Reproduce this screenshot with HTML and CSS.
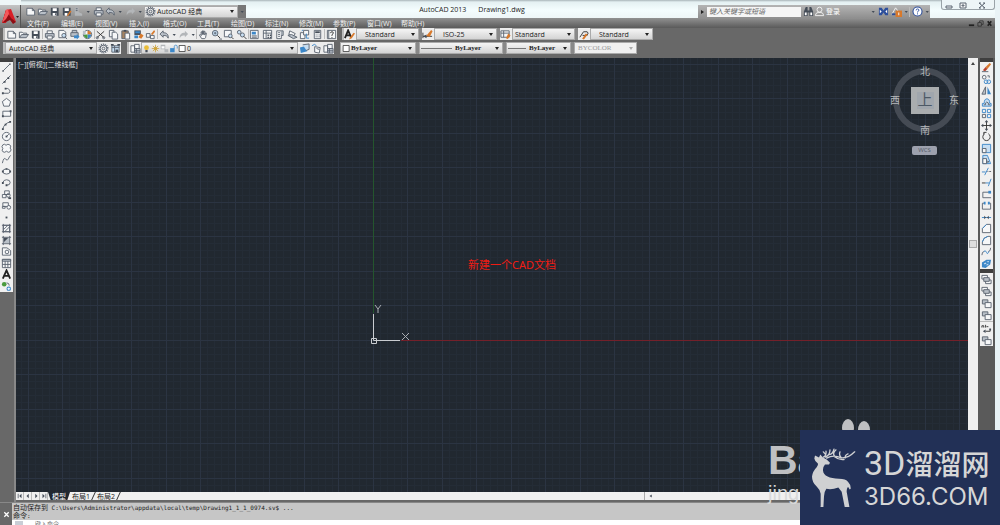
FILE: index.html
```html
<!DOCTYPE html>
<html lang="zh-CN">
<head>
<meta charset="utf-8">
<title>AutoCAD 2013 Drawing1.dwg</title>
<link rel="stylesheet" href="styles.css">
</head>
<body>
<svg class="defs" aria-hidden="true">
  <defs>
    <symbol id="new" viewBox="0 0 12 12"><path class="o w" d="M2 2.500h6l2.500 2.500v5h-8.500z"/><path class="o" d="M8 2.500v2.500h2.500"/></symbol>
    <symbol id="open" viewBox="0 0 12 12"><path class="o w" d="M1.500 9.500v-6h3l1 1h4v2"/><path class="o g" d="M1.500 9.500l2.500-3.500h7.500l-2.500 3.500z"/></symbol>
    <symbol id="save" viewBox="0 0 12 12"><path class="d" d="M2 2h8.500v8.500h-7.500l-1-1z"/><path class="wf" d="M4 2.500h4.500v3h-4.500zM4 7.500h4v3h-4z"/><path class="d" d="M6.500 8h1v2h-1z"/></symbol>
    <symbol id="saveas" viewBox="0 0 12 12"><path class="d" d="M2 2h8.500v8.500h-7.500l-1-1z"/><path class="wf" d="M4 2.500h4.500v3h-4.500zM4 7.500h3v3h-3z"/><path class="or" d="M10 5l1.500 1-3.500 4.500-2 1z"/></symbol>
    <symbol id="print" viewBox="0 0 12 12"><path class="o w" d="M3.500 5v-3h5.500v3"/><path class="o g" d="M1.500 5h9.500v4h-9.500z"/><path class="o w" d="M3.500 7.500h5.500v3.500h-5.500z"/></symbol>
    <symbol id="preview" viewBox="0 0 12 12"><path class="o w" d="M2 1.500h5.500l2 2v6h-7.500z"/><circle class="o b" cx="7.500" cy="7" r="2.200"/><path class="o" d="M9 9l2 2"/></symbol>
    <symbol id="publish" viewBox="0 0 12 12"><path class="o g" d="M2 4h8v4h-8zM3.500 4v-2.500h5v2.500"/><path class="bf" d="M5.500 7h3v-1.500l3 3-3 3v-1.500h-3z"/></symbol>
    <symbol id="globe" viewBox="0 0 12 12"><circle class="o w" cx="6" cy="6" r="4.500"/><path class="or" d="M6 6v-4a4 4 0 0 1 4 4z"/><path class="bf" d="M6 6h4a4 4 0 0 1-4 4z"/><path class="gr" d="M6 6v4a4 4 0 0 1-4-4z"/><path class="g" d="M1 2h3v4h-3z"/></symbol>
    <symbol id="cut" viewBox="0 0 12 12"><path class="o k" d="M2 2.500l8 7M10 2.500l-8 7"/><circle class="o" cx="2.500" cy="9.500" r="1.200"/><circle class="o" cx="9.500" cy="9.500" r="1.200"/></symbol>
    <symbol id="copy" viewBox="0 0 12 12"><path class="o w" d="M1.500 1.500h5v7h-5z"/><path class="o w" d="M4.500 3.500h4l2 2v5.500h-6z"/></symbol>
    <symbol id="paste" viewBox="0 0 12 12"><path class="o br" d="M2 2h7v8.500h-7z"/><path class="d" d="M4 1h3v2h-3z"/><path class="o w" d="M5.500 4.500h5v6.500h-5z"/></symbol>
    <symbol id="match" viewBox="0 0 12 12"><path class="d" d="M1.500 1.500h7v5h-7z"/><path class="bf" d="M2.500 2.500h5v2h-5zM1.500 7h4v3h-4z"/><path class="or" d="M8.500 5l3 2-2.500 3.500-3-1.500z"/></symbol>
    <symbol id="block" viewBox="0 0 12 12"><path class="o w" d="M1.500 5h4v4h-4zM6 7h4v3.500h-4z"/><path class="or" d="M10 1l1 2-3 3.500-1.500-1z"/></symbol>
    <symbol id="undo" viewBox="0 0 12 12"><path class="o g" d="M1 5.500l3.500-3.500v2c4 0 6 2 5.500 6-1-2.500-2.500-3-5.500-3v2z"/></symbol>
    <symbol id="redo" viewBox="0 0 12 12"><path class="l" d="M11 5.500l-3.500-3.500v2c-4 0-6 2-5.500 6 1-2.500 2.500-3 5.500-3v2z"/></symbol>
    <symbol id="caret" viewBox="0 0 6 12"><path class="d" d="M1.500 5.500h3.500l-1.750 2z"/></symbol>
    <symbol id="pan" viewBox="0 0 12 12"><path class="o w" d="M4 10.500l-2.500-4 .8-.6 1.400 1.300-.4-4 .9-.2.7 3v-4h1v4l.8-3.600.9.200-.3 4 1-2.400.9.300-1 5-.8 1z"/></symbol>
    <symbol id="zoom" viewBox="0 0 12 12"><circle class="o b" cx="4.500" cy="4.500" r="3"/><path class="o k" d="M7 7l3 3"/><path class="o" d="M3 4.500h3M4.500 3v3M9 11h3"/></symbol>
    <symbol id="zoomwin" viewBox="0 0 12 12"><path class="o w" d="M1.500 1.500h7.500v7h-7.500z"/><circle class="o b" cx="8" cy="7.500" r="2"/><path class="o k" d="M9.500 9l2 2"/></symbol>
    <symbol id="zoomprev" viewBox="0 0 12 12"><circle class="o b" cx="3.500" cy="3.500" r="2"/><circle class="o b" cx="7" cy="6.500" r="2.200"/><path class="o k" d="M8.500 8l3 3"/></symbol>
    <symbol id="props" viewBox="0 0 12 12"><path class="o w" d="M1.500 1.500h8.500v9h-8.500z"/><path class="bf" d="M3 3h4.500v3h-4.500z"/><path class="o" d="M3 7.500h5.500M3 9h5.500"/></symbol>
    <symbol id="dc" viewBox="0 0 12 12"><path class="o w" d="M1.500 1.500h9v9h-9zM4.500 1.500v9M1.500 4.500h9"/><path class="d" d="M6 6h1.500v1.500h-1.500zM8.500 6h1.500v1.500h-1.500zM6 8.500h1.500v1.500h-1.500zM8.500 8.500h1.500v1.500h-1.500z"/></symbol>
    <symbol id="palette" viewBox="0 0 12 12"><path class="o w" d="M3 2h5v8.500h-5z"/><path class="o g" d="M8 2h2v5h-2"/><path class="o" d="M4.500 4h2M4.500 6h2M4.500 8h2"/></symbol>
    <symbol id="plan" viewBox="0 0 12 12"><path class="l" d="M2 1.500h4v5l4 2v2h-8z"/><path class="o" d="M3 3h2M3 5h2"/></symbol>
    <symbol id="sheet" viewBox="0 0 12 12"><path class="o w" d="M3 2l6 3-2 3-5-2z"/><path class="o g" d="M1 7l4-1 6 3-4 1.500z"/></symbol>
    <symbol id="markup" viewBox="0 0 12 12"><path class="o w" d="M1.500 4h5v6.500h-5z"/><path class="o w" d="M5 1.500h5.500v5h-5.500z"/><path class="bfo" d="M8 5v5h3M3 2l1.500-1"/></symbol>
    <symbol id="calc" viewBox="0 0 12 12"><path class="o w" d="M2.500 1.500h7v9h-7z"/><path class="d" d="M3.500 2.500h5v2h-5z"/><path class="dash" d="M4 6.500h5M4 8.500h5"/></symbol>
    <symbol id="help" viewBox="0 0 12 12"><path class="o w" d="M1.500 1.500h9v9h-9zM3 1.500v9"/><path class="o k" d="M5 4.500q0-1.500 1.500-1.500t1.500 1.200-1.500 2v1.300M6.500 8.800v1"/></symbol>
    <symbol id="gear" viewBox="0 0 12 12"><circle class="dash wide" cx="6" cy="6" r="4.500"/><circle class="o" cx="6" cy="6" r="3.600"/><circle class="o" cx="6" cy="6" r="1.500"/></symbol>
    <symbol id="lock" viewBox="0 0 12 12"><path class="o b" d="M2 3h8v7h-8z"/><path class="o" d="M2 5h8M5 3v7"/><path class="d" d="M1 1h3v2h-3zM8 1h3v2h-3zM6 7h3v3h-3z"/></symbol>
    <symbol id="layers" viewBox="0 0 12 12"><path class="o w" d="M1 3h4v7h-4zM5 1.500h5v5h-5z"/><path class="o g" d="M5 6h6v5h-6z"/><path class="o" d="M7 6v5M5 8.500h6"/></symbol>
    <symbol id="layerblue" viewBox="0 0 12 12"><path class="bf" d="M1 5l7-2 1 6-7 2z"/><path class="o b" d="M4 2l7-1v6l-3 1"/></symbol>
    <symbol id="layerprev" viewBox="0 0 12 12"><path class="bfo" d="M1 3q3-3 5 0"/><path class="o w" d="M4 4l6 1-1 6-5-1z"/><path class="o" d="M6 6l3 1"/></symbol>
    <symbol id="bulb" viewBox="0 0 12 12"><circle class="ye" cx="6" cy="5" r="3.200"/><path class="d" d="M4.500 8h3v3h-3z"/></symbol>
    <symbol id="sun" viewBox="0 0 12 12"><circle class="ye" cx="6" cy="6" r="2.500"/><path class="yeo" d="M6 1v10M1 6h10M2.500 2.500l7 7M9.500 2.500l-7 7"/></symbol>
    <symbol id="freeze" viewBox="0 0 12 12"><path class="l" d="M1 1h6v6h-6zM6 7h5v4h-5z"/><path class="wf" d="M2 3h4v3h-4z"/></symbol>
    <symbol id="unlock" viewBox="0 0 12 12"><path class="bf" d="M1.500 5.500h6v5.500h-6z"/><path class="bfo" d="M7 6v-2.500q0-2 2-2t2 2v2.500"/></symbol>
    <symbol id="square" viewBox="0 0 12 12"><path class="o k white" d="M1.500 2h8v8h-8z"/></symbol>
    <symbol id="textstyle" viewBox="0 0 12 12"><path class="ks" d="M1 10l3.500-8.500 3 7M2.500 7h4"/><path class="or" d="M10.500 4l1.500 1-3.500 5-3 1.500 1-2.500z"/></symbol>
    <symbol id="dimstyle" viewBox="0 0 12 12"><path class="o k" d="M1 4v6M1 8h10"/><path class="d" d="M1 8l4-2v4z"/><path class="or" d="M10 1l1.500 1.500-3 6-4-1z"/></symbol>
    <symbol id="tablestyle" viewBox="0 0 12 12"><path class="o w" d="M1 2h9v7h-9zM1 4.500h9M4 2v7"/><path class="or" d="M9 5l2.500 2-3 4-2-1z"/></symbol>
    <symbol id="leader" viewBox="0 0 12 12"><path class="o k" d="M2 9l4-6h4q2 1 0 4h-5"/><path class="or" d="M8.500 5l2 1-4 5.500-2-1z"/></symbol>
    <symbol id="line" viewBox="0 0 12 12"><path class="o" d="M2.500 9.500l7-7"/><path class="d" d="M1.500 9h1.500v1.500h-1.500zM9 1.500h1.500v1.500h-1.500z"/></symbol>
    <symbol id="xline" viewBox="0 0 12 12"><path class="o" d="M1.500 10.500l9-9"/><path class="d" d="M3 7.500h2v2h-2zM7 3.500h2v2h-2z"/></symbol>
    <symbol id="pline" viewBox="0 0 12 12"><path class="o" d="M2 9h6q3-1 1.500-3.500t-5-1.500"/><path class="d" d="M1 8h2v2h-2zM4 3h2v2h-2z"/></symbol>
    <symbol id="polygon" viewBox="0 0 12 12"><path class="o w" d="M6 1.500l4.500 3.500-1.500 5h-6l-1.500-5z"/></symbol>
    <symbol id="rect" viewBox="0 0 12 12"><path class="o w" d="M2 3.500h8.500v5.500h-8.500z"/><path class="d" d="M1 8h2v2h-2zM9.500 2.500h2v2h-2z"/></symbol>
    <symbol id="arc" viewBox="0 0 12 12"><path class="o" d="M2 10q1-6 8-8"/><path class="d" d="M1 9h2v2h-2zM4 4h2v2h-2zM9 1h2v2h-2z"/></symbol>
    <symbol id="circle" viewBox="0 0 12 12"><circle class="o w" cx="6" cy="6" r="4.500"/><path class="o" d="M6 6l2.500-2.500"/><path class="d" d="M5 5h2v2h-2z"/></symbol>
    <symbol id="cloud" viewBox="0 0 12 12"><path class="o w" d="M2 2q2-1.500 3.500.5q2-2 4-.5q2 1 .5 3.500q2 2 0 4q-2 1.500-4-.5q-2 2-4 .5q-1.500-1.500 0-3.500q-2-2 0-4z"/></symbol>
    <symbol id="spline" viewBox="0 0 12 12"><path class="o" d="M1.500 10q1.500-7 3.500-4.500t3 0 2.500-4"/></symbol>
    <symbol id="ellipse" viewBox="0 0 12 12"><ellipse class="o w" cx="6" cy="6" rx="4" ry="2.800"/><path class="d" d="M1 5h2v2h-2zM9 5h2v2h-2zM5 2.500h2v1.500h-2z"/></symbol>
    <symbol id="earc" viewBox="0 0 12 12"><path class="o" d="M2 6q1-3 4-3 4 0 4 3t-4 3"/><path class="d" d="M1 5.500h2v2h-2zM5 8h2v2h-2z"/></symbol>
    <symbol id="insert" viewBox="0 0 12 12"><path class="o w" d="M4 2h5v4h-5zM1.500 6h4v3.500h-4z"/><circle class="o" cx="8" cy="7" r="2"/><path class="d" d="M8 9h3v2h-3z"/></symbol>
    <symbol id="makeblock" viewBox="0 0 12 12"><path class="o w" d="M2 3h6v4h-6zM1.500 7h3v2h-3z"/><circle class="o w" cx="8.500" cy="8" r="2"/></symbol>
    <symbol id="point" viewBox="0 0 12 12"><path class="d" d="M5 5h2v2h-2z"/></symbol>
    <symbol id="hatch" viewBox="0 0 12 12"><path class="o w" d="M2.500 2.500h7v7h-7z"/><path class="o" d="M1 2.500h10M1 9.500h10M2.500 1v10M9.500 1v10M3 7l4-4M4 9.500l5.500-5.500"/></symbol>
    <symbol id="gradient" viewBox="0 0 12 12"><path class="g" d="M3 3h6v6h-6z"/><path class="d" d="M3 3h5l-5 5z"/><path class="o" d="M1 2.500h10M1 9.500h10M2.500 1v10M9.500 1v10"/></symbol>
    <symbol id="region" viewBox="0 0 12 12"><path class="o w" d="M1.500 2h5l4 3v5h-9z"/><circle class="o w" cx="6.500" cy="6.500" r="2"/></symbol>
    <symbol id="table" viewBox="0 0 12 12"><path class="o w" d="M1.500 1.500h9v9h-9zM4.500 1.500v9M7.500 1.500v9M1.500 7h9"/><path class="o g" d="M1.500 1.500h9v2h-9z"/></symbol>
    <symbol id="mtext" viewBox="0 0 12 12"><path class="ks" d="M2 10.500l4-9 4 9M3.500 7.500h5"/></symbol>
    <symbol id="addsel" viewBox="0 0 12 12"><circle class="gr" cx="3.500" cy="3.500" r="2.500"/><path class="o" d="M6 2q3 0 3 3"/><circle class="bf" cx="8.500" cy="8.500" r="2.500"/><path class="wf" d="M8 7h1v3h-1zM7 8h3v1h-3z"/></symbol>
    <symbol id="erase" viewBox="0 0 12 12"><path class="or" d="M9.500 1l1.500 1.500-4 5-2-2z"/><path class="rd" d="M5 5.500l2 2-2.500 2.500-2.500-1z"/><path class="o" d="M1 10.500h7"/></symbol>
    <symbol id="mcopy" viewBox="0 0 12 12"><circle class="o w" cx="3.500" cy="3.500" r="2"/><path class="o" d="M7 2h2v2"/><circle class="bfo" cx="5.500" cy="8.500" r="2"/><circle class="bfo" cx="8.500" cy="8.500" r="2"/></symbol>
    <symbol id="mirror" viewBox="0 0 12 12"><path class="o g" d="M5 2v8h-4z"/><path class="bf" d="M7 2v8h4z"/></symbol>
    <symbol id="offset" viewBox="0 0 12 12"><path class="bfo b" d="M1.500 10v-3h2q0-5 3-5t3 5h1.500v3z"/><path class="o" d="M3 8.500h2v-2q1-2 3 0v2h2"/></symbol>
    <symbol id="array" viewBox="0 0 12 12"><path class="bfo" d="M1.500 1.500h3.500v3.500h-3.500zM7 1.500h3.500v3.500h-3.500zM7 7h3.500v3.500h-3.500z"/><path class="o" d="M1.500 7h3.500v3.500h-3.500z"/></symbol>
    <symbol id="move" viewBox="0 0 12 12"><path class="o k" d="M6 2v8M2 6h8"/><path class="d" d="M6 0l2 2.500h-4zM6 12l2-2.500h-4zM0 6l2.500-2v4zM12 6l-2.500-2v4z"/></symbol>
    <symbol id="rotate" viewBox="0 0 12 12"><path class="o k" d="M4 3a4 4 0 1 0 4 0M6 1.500h-3v2.500"/></symbol>
    <symbol id="scale" viewBox="0 0 12 12"><path class="bfo b" d="M1.500 1.500h9v9h-9z"/><path class="o w" d="M1.500 6h4v4.500h-4z"/></symbol>
    <symbol id="stretch" viewBox="0 0 12 12"><path class="bfo b" d="M2 1.500h5l3.500 9h-8.500z"/><path class="o w" d="M2 5h4v5.500h-4z"/><path class="d" d="M7 7l2 1.500-2 1.500z"/></symbol>
    <symbol id="trim" viewBox="0 0 12 12"><path class="bfo" d="M1 6.500h4M4 10l4-8"/><path class="o" d="M7 6h1M9 6h2"/></symbol>
    <symbol id="extend" viewBox="0 0 12 12"><path class="bfo" d="M8 10l3-8"/><path class="o k" d="M1 6.500h4"/><path class="bfo" d="M5 6.500h4"/></symbol>
    <symbol id="breakpt" viewBox="0 0 12 12"><path class="o" d="M9 3.500h-7v6h9"/><path class="bf" d="M8 2h3v3h-3z"/></symbol>
    <symbol id="break" viewBox="0 0 12 12"><path class="o" d="M4 3.500h-2.500v6.500h9v-6.500h-2.500"/><path class="bf" d="M3 2h2v3h-2zM7.500 2h2v3h-2z"/></symbol>
    <symbol id="join" viewBox="0 0 12 12"><path class="bfo" d="M1 6h10"/><path class="d" d="M3.500 4l2 2-2 2zM8.500 4l-2 2 2 2z"/></symbol>
    <symbol id="chamfer" viewBox="0 0 12 12"><path class="o w" d="M1.500 10.500v-4.500l4.500-4.500h4.500v9z"/><path class="bfo" d="M1.500 6l4.500-4.500"/></symbol>
    <symbol id="fillet" viewBox="0 0 12 12"><path class="o w" d="M1.500 10.500v-3q1-5 6-6h3v9z"/><path class="bfo" d="M1.500 7.500q1-5 6-6"/></symbol>
    <symbol id="blend" viewBox="0 0 12 12"><path class="o" d="M1 10q0-4 2.500-4M8 6q2.500 0 2.500-4"/><path class="bfo" d="M3 6q2-2 3 1t2.500-1"/></symbol>
    <symbol id="explode" viewBox="0 0 12 12"><path class="bf" d="M1 5l5-3 5 0-1 5-5 4-4-1z"/><path class="b" d="M3 6l2-1 1 1-2 1zM6 4l3-1-1 2zM5 8l3-2 0 2z"/></symbol>
    <symbol id="front" viewBox="0 0 12 12"><path class="o w" d="M1 1.500h6v4h-6zM5 6.500h6v4h-6z"/><path class="o g" d="M3 4h6v4h-6z"/></symbol>
    <symbol id="back" viewBox="0 0 12 12"><path class="o g" d="M1.500 2h6v4.500h-6z"/><path class="o w" d="M4.500 5h6.500v5.500h-6.500z"/></symbol>
    <symbol id="annot" viewBox="0 0 12 12"><path class="o k" d="M1 5v-2h2v2M5 5v-3M6 4h2M5 9h5v-2"/><path class="d" d="M5 7v4l-3-2zM9 6h2v2h-2z"/></symbol>
    <symbol id="binoc" viewBox="0 0 12 12"><path class="d" d="M3 1h2v4h2v-4h2l2 5v5h-4v-4h-2v4h-4v-5z"/><path class="wf" d="M2 7h2v3h-2zM8 7h2v3h-2z"/></symbol>
    <symbol id="user" viewBox="0 0 12 12"><circle class="wo" cx="6" cy="4" r="2.700"/><path class="wo" d="M1.500 10.500q0-3 3-3.500h3q3 .5 3 3.500z"/></symbol>
    <symbol id="exchange" viewBox="0 0 12 12"><path class="nv" d="M1 2h3l2 3 2-3h3v8h-3l-2-3-2 3h-3z"/><path class="wf" d="M2 4l2 2-2 2zM10 4l-2 2 2 2z"/></symbol>
    <symbol id="alert" viewBox="0 0 12 12"><path class="wo" d="M1 9l4-7 3 4"/><path class="nv" d="M1 8h4v2h-4z"/><path class="or" d="M5 5h7v7h-7z"/><path class="wf" d="M8 7h1v3h-1z"/></symbol>
    <symbol id="info" viewBox="0 0 12 12"><circle class="nv" cx="6" cy="6" r="5.500"/><circle class="wf" cx="6" cy="6" r="4.300"/><path class="nvo" d="M4.500 4.800q0-1.600 1.500-1.600t1.500 1.300-1.500 1.800v.7M6 8v1.200"/></symbol>
  </defs>
</svg>

<div class="app">
  <header class="head">
    <button class="appbtn" aria-label="应用程序菜单">
      <svg class="logo" viewBox="0 0 20 22"><path fill="#d81f26" d="M2 17L6 4l5-1 5 13-4-1-1-3-4 1-1 4z"/><path fill="#8d0d13" d="M6 4l5 8 5 4-3 2-3-4-4 2-4 1z"/><path fill="#f4575a" d="M6 4l2-1 1 5-3 5-4 4z"/><path fill="#222" d="M16 10h3l-1.500 2z"/></svg>
    </button>
    <div class="titlebar">
      <div class="qat">
        <button class="ib" aria-label="新建"><svg><use href="#new"/></svg></button>
        <button class="ib" aria-label="打开"><svg><use href="#open"/></svg></button>
        <button class="ib" aria-label="保存"><svg><use href="#save"/></svg></button>
        <button class="ib" aria-label="另存为"><svg><use href="#saveas"/></svg></button>
        <button class="ib" aria-label="图纸"><svg><use href="#plan"/></svg></button>
        <button class="ib thin" aria-label="更多"><svg><use href="#caret"/></svg></button>
        <button class="ib" aria-label="打印"><svg><use href="#print"/></svg></button>
        <button class="ib" aria-label="放弃"><svg><use href="#undo"/></svg></button>
        <button class="ib thin" aria-label="放弃列表"><svg><use href="#caret"/></svg></button>
        <button class="ib" aria-label="重做"><svg><use href="#redo"/></svg></button>
        <button class="ib thin" aria-label="重做列表"><svg><use href="#caret"/></svg></button>
        <label class="combo ws"><svg class="ic"><use href="#gear"/></svg><select aria-label="工作空间"><option>AutoCAD 经典</option></select></label>
        <button class="ib thin more" aria-label="自定义"><svg><use href="#caret"/></svg></button>
      </div>
      <h1 class="title"><span>AutoCAD 2013</span><span>Drawing1.dwg</span></h1>
      <div class="infobar">
        <span class="play"></span>
        <input class="search" type="text" placeholder="键入关键字或短语" aria-label="搜索">
        <button class="ib" aria-label="查找"><svg><use href="#binoc"/></svg></button>
        <button class="login"><svg class="ic"><use href="#user"/></svg>登录</button>
        <button class="ib thin" aria-label="登录菜单"><svg><use href="#caret"/></svg></button>
        <button class="ib" aria-label="Exchange"><svg><use href="#exchange"/></svg></button>
        <button class="ib" aria-label="通知"><svg><use href="#alert"/></svg></button>
        <button class="ib thin" aria-label="通知菜单"><svg><use href="#caret"/></svg></button>
        <i class="sep"></i>
        <button class="ib" aria-label="帮助"><svg><use href="#info"/></svg></button>
        <button class="ib thin" aria-label="帮助菜单"><svg><use href="#caret"/></svg></button>
      </div>
      <div class="winctl">
        <button aria-label="最小化"><svg viewBox="0 0 12 10"><path class="o w" d="M3 6h6v2h-6z"/></svg></button>
        <button aria-label="还原"><svg viewBox="0 0 12 10"><path class="o w" d="M3 3h6v5h-6zM5 5h2v1h-2z"/></svg></button>
        <button class="close" aria-label="关闭"><svg viewBox="0 0 12 10"><path class="o" d="M3 3l6 5M9 3l-6 5M3 3h2M7 3h2M3 8h2M7 8h2"/></svg></button>
      </div>
    </div>
    <nav class="menu">
      <button>文件(F)</button><button>编辑(E)</button><button>视图(V)</button><button>插入(I)</button><button>格式(O)</button><button>工具(T)</button><button>绘图(D)</button><button>标注(N)</button><button>修改(M)</button><button>参数(P)</button><button>窗口(W)</button><button>帮助(H)</button>
      <span class="docctl"><button aria-label="最小化文档"><svg viewBox="0 0 8 8"><path class="ks" d="M1 6h6"/></svg></button><button aria-label="还原文档"><svg viewBox="0 0 8 8"><path class="o k" d="M3 3v-2h4v4h-2M1 3h4v4h-4z"/></svg></button><button aria-label="关闭文档"><svg viewBox="0 0 8 8"><path class="ks" d="M2 1.500l4 5M6 1.500l-4 5"/></svg></button></span>
    </nav>
  </header>

  <div class="bars">
    <div class="bar">
      <div class="grp std">
        <button class="ib" aria-label="新建"><svg><use href="#new"/></svg></button>
        <button class="ib" aria-label="打开"><svg><use href="#open"/></svg></button>
        <button class="ib" aria-label="保存"><svg><use href="#save"/></svg></button>
        <i class="sep"></i>
        <button class="ib" aria-label="打印"><svg><use href="#print"/></svg></button>
        <button class="ib" aria-label="打印预览"><svg><use href="#preview"/></svg></button>
        <button class="ib" aria-label="发布"><svg><use href="#publish"/></svg></button>
        <button class="ib" aria-label="三维打印"><svg><use href="#globe"/></svg></button>
        <i class="sep"></i>
        <button class="ib" aria-label="剪切"><svg><use href="#cut"/></svg></button>
        <button class="ib" aria-label="复制"><svg><use href="#copy"/></svg></button>
        <button class="ib" aria-label="粘贴"><svg><use href="#paste"/></svg></button>
        <button class="ib" aria-label="特性匹配"><svg><use href="#match"/></svg></button>
        <button class="ib" aria-label="块编辑器"><svg><use href="#block"/></svg></button>
        <i class="sep"></i>
        <button class="ib" aria-label="放弃"><svg><use href="#undo"/></svg></button>
        <button class="ib thin" aria-label="放弃列表"><svg><use href="#caret"/></svg></button>
        <button class="ib" aria-label="重做"><svg><use href="#redo"/></svg></button>
        <button class="ib thin" aria-label="重做列表"><svg><use href="#caret"/></svg></button>
        <i class="sep"></i>
        <button class="ib" aria-label="平移"><svg><use href="#pan"/></svg></button>
        <button class="ib" aria-label="实时缩放"><svg><use href="#zoom"/></svg></button>
        <button class="ib" aria-label="窗口缩放"><svg><use href="#zoomwin"/></svg></button>
        <button class="ib" aria-label="缩放上一个"><svg><use href="#zoomprev"/></svg></button>
        <i class="sep"></i>
        <button class="ib" aria-label="特性"><svg><use href="#props"/></svg></button>
        <button class="ib" aria-label="设计中心"><svg><use href="#dc"/></svg></button>
        <button class="ib" aria-label="工具选项板"><svg><use href="#palette"/></svg></button>
        <button class="ib" aria-label="图纸集"><svg><use href="#sheet"/></svg></button>
        <button class="ib" aria-label="标记集"><svg><use href="#markup"/></svg></button>
        <button class="ib" aria-label="计算器"><svg><use href="#calc"/></svg></button>
        <i class="sep"></i>
        <button class="ib" aria-label="帮助"><svg><use href="#help"/></svg></button>
      </div>
      <div class="grp styles">
        <svg class="ic"><use href="#textstyle"/></svg><label class="combo style"><select aria-label="文字样式"><option>Standard</option></select></label>
        <i class="gripgap"></i>
        <svg class="ic"><use href="#dimstyle"/></svg><label class="combo style"><select aria-label="标注样式"><option>ISO-25</option></select></label>
        <i class="gripgap"></i>
        <svg class="ic"><use href="#tablestyle"/></svg><label class="combo style near"><select aria-label="表格样式"><option>Standard</option></select></label>
        <i class="gripgap"></i>
        <svg class="ic"><use href="#leader"/></svg><label class="combo style"><select aria-label="多重引线样式"><option>Standard</option></select></label>
      </div>
    </div>
    <div class="bar">
      <div class="grp">
        <label class="combo space"><select aria-label="工作空间"><option>AutoCAD 经典</option></select></label>
        <button class="ib" aria-label="工作空间设置"><svg><use href="#gear"/></svg></button>
        <button class="ib" aria-label="锁定"><svg><use href="#lock"/></svg></button>
      </div>
      <div class="grp layergrp">
        <button class="ib" aria-label="图层特性"><svg><use href="#layers"/></svg></button>
        <label class="combo layer"><svg class="si"><use href="#bulb"/></svg><svg class="si"><use href="#sun"/></svg><svg class="si"><use href="#freeze"/></svg><svg class="si"><use href="#unlock"/></svg><svg class="si"><use href="#square"/></svg><select aria-label="图层"><option>0</option></select></label>
        <button class="ib" aria-label="置为当前"><svg><use href="#layerblue"/></svg></button>
        <button class="ib" aria-label="上一个图层"><svg><use href="#layerprev"/></svg></button>
        <button class="ib" aria-label="图层状态"><svg><use href="#layers"/></svg></button>
      </div>
      <div class="grp propgrp">
        <label class="combo serif c1"><svg class="si"><use href="#square"/></svg><select aria-label="颜色"><option>ByLayer</option></select></label>
        <label class="combo serif c2"><i class="rule"></i><select aria-label="线型"><option>ByLayer</option></select></label>
        <label class="combo serif c3"><i class="rule"></i><select aria-label="线宽"><option>ByLayer</option></select></label>
        <label class="combo serif off"><select aria-label="打印样式" disabled><option>BYCOLOR</option></select></label>
      </div>
    </div>
  </div>

  <main class="work">
    <div class="rail left">
      <div class="stack draw">
        <button aria-label="直线"><svg><use href="#line"/></svg></button>
        <button aria-label="构造线"><svg><use href="#xline"/></svg></button>
        <button aria-label="多段线"><svg><use href="#pline"/></svg></button>
        <button aria-label="多边形"><svg><use href="#polygon"/></svg></button>
        <button aria-label="矩形"><svg><use href="#rect"/></svg></button>
        <button aria-label="圆弧"><svg><use href="#arc"/></svg></button>
        <button aria-label="圆"><svg><use href="#circle"/></svg></button>
        <button aria-label="修订云线"><svg><use href="#cloud"/></svg></button>
        <button aria-label="样条曲线"><svg><use href="#spline"/></svg></button>
        <button aria-label="椭圆"><svg><use href="#ellipse"/></svg></button>
        <button aria-label="椭圆弧"><svg><use href="#earc"/></svg></button>
        <button aria-label="插入块"><svg><use href="#insert"/></svg></button>
        <button aria-label="创建块"><svg><use href="#makeblock"/></svg></button>
        <button aria-label="点"><svg><use href="#point"/></svg></button>
        <button aria-label="图案填充"><svg><use href="#hatch"/></svg></button>
        <button aria-label="渐变色"><svg><use href="#gradient"/></svg></button>
        <button aria-label="面域"><svg><use href="#region"/></svg></button>
        <button aria-label="表格"><svg><use href="#table"/></svg></button>
        <button aria-label="多行文字"><svg><use href="#mtext"/></svg></button>
        <button aria-label="添加选定对象"><svg><use href="#addsel"/></svg></button>
      </div>
    </div>

    <div class="doc">
      <section class="stage">
        <svg class="grid" aria-hidden="true">
          <defs>
            <pattern id="cells" x="12" y="6" width="69" height="69" patternUnits="userSpaceOnUse">
              <path stroke="#242c36" d="M7.500 0v69M14.500 0v69M21.500 0v69M28.500 0v69M41.500 0v69M48.500 0v69M55.500 0v69M62.500 0v69M0 7.500h69M0 14.500h69M0 21.500h69M0 28.500h69M0 41.500h69M0 48.500h69M0 55.500h69M0 62.500h69"/>
              <path stroke="#2b3442" d="M.5 0v69M34.500 0v69M0 .5h69M0 34.500h69"/>
            </pattern>
          </defs>
          <rect width="100%" height="100%" fill="url(#cells)"/>
          <path stroke="#24552d" d="M357.500 0v255"/>
          <svg x="385" y="282" width="100%" height="1"><rect width="100%" height="1" fill="#74202a"/></svg>
          <path fill="none" stroke="#c9ccd0" d="M357.500 256v23M361 282.500h23M355.500 280.500h5v5h-5zM357.500 279v3.500h3"/>
          <path fill="none" stroke="#a9adb3" d="M359 247l3 4 3-4M362 251v4M386 275l7 7M393 275l-7 7"/>
        </svg>
        <p class="viewlabel">[−][俯视][二维线框]</p>
        <p class="note">新建一个CAD文档</p>
        <svg class="compass" viewBox="0 0 76 76" role="img" aria-label="ViewCube">
          <circle cx="38" cy="38" r="29" fill="none" stroke="#454b54" stroke-width="6"/>
          <rect x="24" y="25" width="28" height="27" fill="#aaadaf"/>
          <rect x="30" y="30" width="17" height="17" fill="#a0a6ad"/>
          <g class="dir"><text x="38" y="13">北</text><text x="38" y="72">南</text><text x="8" y="42">西</text><text x="67" y="42">东</text></g>
          <text class="top" x="38" y="43">上</text>
        </svg>
        <button class="wcs">WCS <i></i></button>
      </section>
      <div class="vscroll"><span class="up"></span><span class="thumb"></span></div>
      <div class="tabs">
        <button class="nav" aria-label="首个"><svg viewBox="0 0 8 8"><path class="d" d="M1 1h1v6h-1zM6 1v6l-3-3z"/></svg></button>
        <button class="nav" aria-label="上一个"><svg viewBox="0 0 8 8"><path class="d" d="M5 1v6l-3-3z"/></svg></button>
        <button class="nav" aria-label="下一个"><svg viewBox="0 0 8 8"><path class="d" d="M3 1v6l3-3z"/></svg></button>
        <button class="nav" aria-label="末个"><svg viewBox="0 0 8 8"><path class="d" d="M6 1h1v6h-1zM2 1v6l3-3z"/></svg></button>
        <button class="tab on">模型</button><button class="tab">布局1</button><i class="slash"></i><button class="tab">布局2</button><i class="slash"></i>
        <span class="hscroll"><svg viewBox="0 0 8 8"><path class="d" d="M5 2v4l-3-2z"/></svg></span>
      </div>
    </div>

    <div class="rail right">
      <div class="stack modify">
        <button aria-label="删除"><svg><use href="#erase"/></svg></button>
        <button aria-label="复制"><svg><use href="#mcopy"/></svg></button>
        <button aria-label="镜像"><svg><use href="#mirror"/></svg></button>
        <button aria-label="偏移"><svg><use href="#offset"/></svg></button>
        <button aria-label="阵列"><svg><use href="#array"/></svg></button>
        <button aria-label="移动"><svg><use href="#move"/></svg></button>
        <button aria-label="旋转"><svg><use href="#rotate"/></svg></button>
        <button aria-label="缩放"><svg><use href="#scale"/></svg></button>
        <button aria-label="拉伸"><svg><use href="#stretch"/></svg></button>
        <button aria-label="修剪"><svg><use href="#trim"/></svg></button>
        <button aria-label="延伸"><svg><use href="#extend"/></svg></button>
        <button aria-label="打断于点"><svg><use href="#breakpt"/></svg></button>
        <button aria-label="打断"><svg><use href="#break"/></svg></button>
        <button aria-label="合并"><svg><use href="#join"/></svg></button>
        <button aria-label="倒角"><svg><use href="#chamfer"/></svg></button>
        <button aria-label="圆角"><svg><use href="#fillet"/></svg></button>
        <button aria-label="光顺曲线"><svg><use href="#blend"/></svg></button>
        <button aria-label="分解"><svg><use href="#explode"/></svg></button>
      </div>
      <div class="stack order">
        <button aria-label="前置"><svg><use href="#front"/></svg></button>
        <button aria-label="后置"><svg><use href="#front"/></svg></button>
        <button aria-label="置于对象之上"><svg><use href="#back"/></svg></button>
        <button aria-label="置于对象之下"><svg><use href="#back"/></svg></button>
        <i class="hsep"></i>
        <button aria-label="注释前置"><svg><use href="#annot"/></svg></button>
        <button aria-label="图案填充后置"><svg><use href="#back"/></svg></button>
      </div>
    </div>
  </main>

  <footer class="cmd">
    <div class="grip"><button aria-label="关闭命令行"><svg viewBox="0 0 8 8"><path stroke="#fff" stroke-width="1.500" d="M1.500 1.500l5 5M6.500 1.500l-5 5"/></svg></button></div>
    <div class="log">
      <p><span>自动保存到</span> C:\Users\Administrator\appdata\local\temp\Drawing1_1_1_0974.sv$ ...</p>
      <p><span>命令</span>:</p>
      <label class="entry"><i></i><input type="text" placeholder="键入命令" aria-label="命令"></label>
    </div>
  </footer>
</div>

<div class="watermark" aria-hidden="true">
  <svg viewBox="0 0 32 20"><ellipse cx="7" cy="10" rx="6" ry="9"/><ellipse cx="23" cy="12" rx="6" ry="9"/></svg>
  <b>Ba</b><span>jing</span>
</div>

<aside class="brand">
  <svg viewBox="36 25 132 176" aria-hidden="true">
    <path fill="#cfd0d2" d="M45 47l12 6 4-9 7 8 12 7 10 10-3 5-12 0q-7 8-6 18 1 12 14 18 12 6 34 7 20 0 28 10 8 8 7 20l-3 2-5-8q-6 8-3 20l8 45h-14l-10-50q-8-10-10-13-20 8-36 4-7 10-7 22l-2 37h-14l6-6 0-38q-3-14-12-22-14-12-14-30 2-16 14-28 6-8 3-12-8-4-10-14z"/>
    <path fill="none" stroke="#cfd0d2" stroke-width="4" stroke-linecap="round" d="M70 52q10-4 8-18M76 52q14-6 14-22M88 44q10 0 14-16M77 44l-7-8M80 55q20-12 44-1 20 2 40-18M104 50q-8-10 4-20M124 54q-8-8-4-18M136 54q-2-8 8-12M104 51q12 10 28 8"/>
  </svg>
  <div class="words"><strong><span>3D</span>溜溜网</strong><em>3D66.COM</em></div>
</aside>
</body>
</html>
```
FILE: styles.css
```css
* { box-sizing: border-box; }
html, body { height: 100%; }
body {
  margin: 0;
  overflow: hidden;
  background: #e9f3f6;
  color: #222;
  font: 7px/9px "Open Sans", "Noto Sans CJK SC", sans-serif;
}
p, h1 { margin: 0; font-size: inherit; font-weight: normal; }
button, input, select { margin: 0; padding: 0; border: 0; background: none; color: inherit; font: inherit; }
button { display: flex; align-items: center; justify-content: center; white-space: nowrap; }
select { appearance: none; flex: 1; min-width: 0; opacity: 1; }
svg { display: block; flex: none; }

.defs { position: absolute; width: 0; height: 0; }
.o { fill: none; stroke: #5b6470; stroke-width: 1; }
.k { stroke: #333; }
.w { fill: #f6f7f8; }
.wf { fill: #fff; }
.white { fill: #fff; }
.g { fill: #b9c0c8; }
.b { fill: #c7def2; }
.d { fill: #454d58; }
.l { fill: #b3b6b9; }
.br { fill: #a58362; }
.bf { fill: #3c87c8; }
.gr { fill: #4a9a3c; }
.or { fill: #d8792b; }
.rd { fill: #b8402a; }
.ye { fill: #e9bd3a; }
.nv { fill: #2d4f9c; }
.bfo { fill: none; stroke: #3c87c8; }
.bfo.b { fill: #c7def2; }
.yeo { stroke: #c9a040; }
.wo { fill: none; stroke: #f4f4f4; }
.nvo { fill: none; stroke: #2d4f9c; }
.ks { fill: none; stroke: #222; stroke-width: 2; }
.dash { fill: none; stroke: #5b6470; stroke-dasharray: 1 1; }
.wide { stroke-width: 2; }

.app { display: flex; flex-direction: column; height: 100%; padding-right: 5px; }

/* Title bar and menu */
.head { display: grid; grid-template: 18px 10px / 21px 1fr; background: #eef6f7; }
.appbtn { grid-row: 1 / 3; margin-top: 5px; background: linear-gradient(#c4c4c4, #777); border-right: 1px solid #555; }
.logo { width: 20px; height: 22px; }
.titlebar { display: flex; align-items: flex-end; background: linear-gradient(#a9b4b8, #e4f0f2 2px, #f4fdfe 10px, #eef6f7); }
.qat, .infobar { display: flex; align-items: center; height: 13px; background: linear-gradient(#b4b4b4, #8f8f8f); }
.qat { padding-left: 3px; }
.ib { width: 12px; height: 12px; flex: none; }
.ib svg, .ic { width: 11px; height: 11px; }
.ic { margin: 0 1px 0 0; }
.ib.thin { width: 6px; }
.ib.thin svg { width: 6px; }
.qat .ib.thin { width: 8px; }
.combo { display: flex; align-items: center; min-width: 0; height: 12px; padding: 0 3px; border: 1px solid #aaa; background: linear-gradient(#f5f5f5, #d4d4d4); }
.combo::after { content: ""; border: 2px solid transparent; border-top: 3px solid #222; border-bottom: 0; }
.ws { width: 94px; padding-left: 0; }
.qat .more { height: 13px; background: #777; }
.title { display: flex; flex: 1; justify-content: center; gap: 12px; align-self: center; }
.infobar { width: 232px; }
.play { margin: 0 3px; border: 2px solid transparent; border-left: 3px solid #222; border-right: 0; }
.search { width: 94px; height: 10px; padding: 0 2px; background: #f5f5f5; font-style: italic; }
.search::placeholder { color: #666; }
.login { flex: 1; justify-content: flex-start; color: #fff; }
.infobar .ib { margin-left: 1px; }
.winctl { display: flex; align-self: flex-start; height: 10px; margin-left: 11px; border: 1px solid #9aa3a8; border-top: 0; border-radius: 0 0 3px 3px; background: #edf5f7; }
.winctl button { width: 14px; }
.winctl .close { width: 24px; }
.winctl svg { width: 12px; height: 10px; }
.menu { display: flex; align-items: center; padding-left: 6px; background: linear-gradient(#919191, #5a5a5a); color: #f1f1f1; }
.menu > button { flex: 0 0 34px; justify-content: flex-start; }
.docctl { display: flex; gap: 2px; margin-left: auto; padding-right: 2px; }
.docctl svg { width: 7px; height: 7px; }

/* Toolbars */
.bars { display: flex; flex-direction: column; gap: 2px; padding: 0 0 4px 3px; background: #686868; }
.bar { display: flex; height: 12px; }
.grp { display: flex; align-items: center; background: #ececec; border-left: 2px solid #bbb; }
.std { width: 334px; justify-content: space-between; }
.sep { width: 1px; height: 10px; background: #bbb; }
.styles { margin-left: 5px; }
.style { width: 63px; padding-left: 8px; }
.style.near { padding-left: 2px; }
.gripgap { width: 3px; height: 12px; background: #888; }
.space { width: 92px; }
.layergrp { margin-left: 6px; }
.layer { width: 157px; padding-left: 0; }
.si { width: 9px; height: 9px; }
.propgrp { margin-left: 6px; gap: 3px; background: #888; border: 0; }
.serif { padding-left: 1px; font-family: "Liberation Serif", serif; font-weight: bold; }
.c1 { width: 76px; }
.c2 { width: 84px; }
.c3 { width: 65px; }
.rule { width: 31px; height: 1px; margin-right: 3px; background: #777; }
.c3 .rule { width: 18px; }
.off { width: 63px; padding-left: 3px; background: #f0f0f0; color: #999; font-weight: normal; }
.off::after { border-top-color: #aaa; }

/* Work area */
.work { display: flex; flex: 1; min-height: 0; background: #686868; }
.rail { display: flex; flex-direction: column; }
.left { width: 16px; border-right: 2px solid #888; }
.right { width: 17px; padding: 0 2px; background: #5a5a5a; }
.stack { display: flex; flex-direction: column; width: 13px; border-top: 4px solid #3f3f3f; background: #f0f0f0; }
.stack button { flex: 1; min-height: 0; }
.stack svg { width: 11px; height: 11px; }
.draw { height: 234px; }
.modify { height: 211px; }
.order { height: 77px; }
.hsep { height: 1px; background: #bbb; }
.doc { display: grid; grid-template: 1fr 8px / 1fr 10px; flex: 1; min-width: 0; margin-bottom: 2px; }
.stage { position: relative; overflow: hidden; background: #212830; }
.grid { width: 100%; height: 100%; }
.viewlabel { position: absolute; left: 2px; top: 2px; color: #e3e3e3; }
.note { position: absolute; left: 452px; top: 199px; color: #f01c14; font: 11px/15px "Noto Sans", "Noto Sans CJK SC", sans-serif; }
.compass { position: absolute; right: 5px; top: 4px; width: 76px; height: 76px; }
.compass text { fill: #b5b8ba; font: 10px "Noto Sans CJK SC", sans-serif; text-anchor: middle; }
.compass .top { fill: #4c5966; font-size: 15px; }
.wcs { position: absolute; right: 31px; top: 88px; width: 25px; height: 9px; border-radius: 2px; background: #9da1ae; color: #545b68; font-size: 6px; }
.vscroll { grid-row: 1 / 3; grid-column: 2; display: flex; flex-direction: column; align-items: center; background: #f0f0f0; }
.vscroll::after { content: ""; height: 57%; }
.up { margin-top: 4px; border: 2px solid transparent; border-bottom: 3px solid #444; border-top: 0; }
.thumb { width: 8px; height: 8px; margin-top: auto; border: 1px solid #aaa; background: #ddd; }
.tabs { display: flex; align-items: center; min-width: 0; background: #f0f0f0; }
.nav { width: 8px; height: 8px; border-right: 1px solid #bbb; }
.nav svg, .hscroll svg { width: 6px; height: 6px; }
.tab { height: 8px; padding: 0 2px; }
.tab.on { padding: 0 4px; background: #212830; color: #fff; clip-path: polygon(0 0, 100% 0, 88% 100%, 12% 100%); }
.slash { width: 1px; height: 8px; margin: 0 1px; background: #333; transform: skewX(-25deg); }
.hscroll { display: flex; align-items: center; width: 34%; height: 8px; margin-left: auto; padding-left: 3px; border-left: 1px solid #aaa; }

/* Command line */
.cmd { display: flex; height: 23px; border-top: 1px solid #888; background: #c6c6c6; }
.grip { display: flex; width: 12px; align-items: center; justify-content: center; background: #686868; }
.grip svg { width: 7px; height: 7px; }
.log { flex: 1; min-width: 0; padding-top: 1px; font: 6px/9px "DejaVu Sans Mono", "Noto Sans CJK SC", monospace; }
.log p { padding-left: 1px; line-height: 8px; white-space: pre; }
.log span { font-size: 7px; }
.entry { display: flex; align-items: center; gap: 12px; height: 6px; padding-left: 3px; background: #fff; }
.entry i { width: 8px; height: 4px; background: #c9ced6; }
.entry input { flex: 1; height: 6px; }

/* Corner marks */
.watermark { position: absolute; right: 128px; bottom: 20px; display: flex; flex-direction: column; width: 104px; color: #bfc0c2; font-family: "Liberation Sans", sans-serif; }
.watermark svg { width: 32px; height: 20px; margin-left: 73px; fill: #bfc0c2; }
.watermark b { font-size: 41px; line-height: 44px; }
.watermark span { color: #d8d9da; font-size: 20px; line-height: 23px; }
.brand { position: absolute; right: 0; bottom: 0; display: flex; align-items: center; gap: 8px; width: 200px; padding: 16px 10px 16px 12px; background: #223056; color: #d6d6d6; }
.brand svg { width: 44px; height: 59px; }
.words { display: flex; flex: 1; flex-direction: column; gap: 3px; white-space: nowrap; }
.words strong { display: flex; align-items: center; font: 500 28px/35px "Noto Sans CJK SC", sans-serif; }
.words strong span { font: 34px/35px Roboto, sans-serif; }
.words em { font: 24px/25px Inter, sans-serif; }
```
